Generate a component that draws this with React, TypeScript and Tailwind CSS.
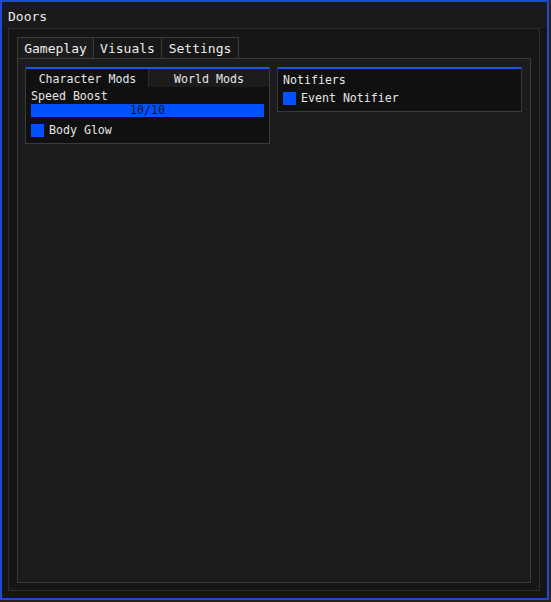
import React from "react"

const mono = { fontFamily: '"DejaVu Sans Mono", "Liberation Mono", monospace' }

function Check({ label }: { label: string }) {
  return (
    <div className="flex items-center h-[14px] gap-[5px]">
      <div className="w-[13px] h-[13px] bg-[#0052ff]" />
      <span className="text-[11.6px] text-[#e6e6e6] leading-none pt-[2px]">{label}</span>
    </div>
  )
}

export default function App() {
  return (
    <div className="w-[551px] h-[602px] bg-[#2a2119] overflow-hidden" style={mono}>
      <div className="w-[549px] h-[600px] border-2 border-[#1d49d6] bg-[#151515] flex flex-col">
        {/* title bar */}
        <div className="h-[26px] shrink-0 bg-[#1a1a1b] flex items-center pl-[6px] pt-[3px] text-[13px] text-[#ececec]">
          Doors
        </div>

        {/* frame */}
        <div className="flex-1 pl-[6px] pr-[7px] pb-[7px]">
          <div className="h-full border border-[#2e2e2e] bg-[#161616] pt-[8px] pl-[8px] pr-[8px] pb-[7px] flex flex-col">
            {/* tabs */}
            <div className="flex h-[21px] shrink-0 text-[13px] text-[#ededed]">
              <div className="w-[77px] pt-[2px] border border-b-0 border-[#3a3a3a] bg-[#1c1c1e] flex items-center justify-center">Gameplay</div>
              <div className="w-[68px] pt-[2px] border border-b-0 border-l-0 border-[#3a3a3a] bg-[#171717] flex items-center justify-center">Visuals</div>
              <div className="w-[77px] pt-[2px] border border-b-0 border-l-0 border-[#3a3a3a] bg-[#171717] flex items-center justify-center">Settings</div>
            </div>

            {/* tab panel */}
            <div className="flex-1 border border-[#3a3a3a] bg-[#1c1c1e] pt-[8px] pl-[7px] pr-[8px] flex gap-[7px] items-start">
              {/* left child */}
              <div className="w-[245px] h-[77px] bg-[#101011] border border-t-0 border-[#3a3a3a] flex flex-col">
                <div className="h-[2px] bg-[#1d55e8] shrink-0" />
                <div className="flex h-[18px] shrink-0 text-[11.6px] text-[#e6e6e6]">
                  <div className="w-[121px] ml-[1px] pt-[3px] flex items-center justify-center bg-[#101011]">Character Mods</div>
                  <div className="flex-1 pt-[3px] flex items-center justify-center bg-[#1c1c1c] border-l border-[#2a2a2a]">World Mods</div>
                </div>
                <div className="px-[5px] flex flex-col">
                  <div className="h-[16px] pt-[3px] flex items-center text-[11.6px] text-[#e6e6e6]">Speed Boost</div>
                  <div className="h-[13px] mt-[1px] pt-[1px] bg-[#0052ff] flex items-center justify-center text-[11.6px] text-[#141414] leading-none">10/10</div>
                  <div className="mt-[6px]">
                    <Check label="Body Glow" />
                  </div>
                </div>
              </div>

              {/* right child */}
              <div className="w-[245px] h-[45px] bg-[#101011] border border-t-0 border-[#3a3a3a] flex flex-col">
                <div className="h-[2px] bg-[#1d55e8] shrink-0" />
                <div className="px-[5px] flex flex-col">
                  <div className="h-[20px] pt-[4px] flex items-center text-[11.6px] text-[#e6e6e6]">Notifiers</div>
                  <div className="mt-[2px]">
                    <Check label="Event Notifier" />
                  </div>
                </div>
              </div>
            </div>
          </div>
        </div>
      </div>
    </div>
  )
}
